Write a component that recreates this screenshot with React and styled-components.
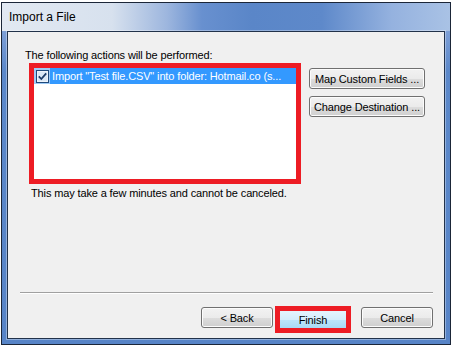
import styled, { createGlobalStyle } from 'styled-components';

const GlobalStyle = createGlobalStyle`
  body {
    margin: 0;
    background: #ffffff;
    font-family: "Liberation Sans", Arial, sans-serif;
  }
`;

const Window = styled.div`
  box-sizing: border-box;
  width: 450px;
  height: 343px;
  margin: 2px 0 0 1px;
  border: 1px solid #1b2638;
  background: #5b88ca;
  display: flex;
  flex-direction: column;
`;

const TitleBar = styled.div`
  flex: none;
  height: 28px;
  display: flex;
  align-items: center;
  padding-left: 7px;
  font-size: 12px;
  color: #000;
  background: linear-gradient(
    to right,
    #e2e9f2 0px,
    #d7e1ee 110px,
    #9db6de 165px,
    #6890cf 200px,
    #5a86c8 250px,
    #5e89ca 320px,
    #95b2df 390px,
    #a9c2e5 448px
  );
`;

const Frame = styled.div`
  flex: 1;
  min-height: 0;
  display: flex;
  padding: 0 5px 5px;
  background: linear-gradient(#7d9fd6, #5b88ca 40px, #5784c7);
`;

const Client = styled.div`
  flex: 1;
  display: flex;
  flex-direction: column;
  border: 1px solid #22324a;
  background: #f0f0f0;
  box-shadow: 0 0 0 1px rgba(255, 255, 255, 0.35);
  letter-spacing: -0.13px;
`;

const Top = styled.div`
  padding: 16px 0 0 17px;
`;

const Caption = styled.div`
  font-size: 11px;
  line-height: 15px;
  color: #000;
  margin-left: ${p => p.$indent || 0}px;
  margin-top: ${p => p.$gap || 0}px;
`;

const MainRow = styled.div`
  display: flex;
  align-items: flex-start;
  margin-left: 4px;
`;

const ListFrame = styled.div`
  box-sizing: border-box;
  width: 272px;
  height: 121px;
  border: 5px solid #ed1c24;
  background: #ffffff;
`;

const ListRow = styled.div`
  display: flex;
  height: 16px;
`;

const CheckCell = styled.div`
  width: 16px;
  display: flex;
  align-items: center;
  justify-content: center;
  background: #9fcaf5;
`;

const RowText = styled.div`
  flex: 1;
  padding-left: 2px;
  background: #3399ff;
  color: #ffffff;
  font-size: 11px;
  line-height: 16px;
  white-space: nowrap;
  overflow: hidden;
`;

const SideButtons = styled.div`
  display: flex;
  flex-direction: column;
  gap: 7px;
  margin-left: 8px;
  padding-top: 5px;
`;

const Button = styled.button`
  box-sizing: border-box;
  width: ${p => p.$w || 72}px;
  height: 21px;
  padding: 0;
  font-family: inherit;
  font-size: 11px;
  letter-spacing: -0.13px;
  color: #000;
  border: 1px solid #707070;
  border-radius: 3px;
  box-shadow: inset 0 0 0 1px #fcfcfc;
  background: linear-gradient(#f2f2f2 0%, #ebebeb 50%, #dddddd 51%, #cfcfcf 100%);
  white-space: nowrap;
`;

const Separator = styled.div`
  margin: auto 11px 0 12px;
  border-top: 1px solid #a0a0a0;
  border-bottom: 1px solid #ffffff;
`;

const Footer = styled.div`
  display: flex;
  justify-content: flex-end;
  align-items: flex-start;
  padding: 13px 11px 5px 0;
`;

const FinishFrame = styled.div`
  box-sizing: border-box;
  width: 76px;
  height: 27px;
  margin: -1px 0 0 2px;
  border: 5px solid #ed1c24;
  display: flex;
`;

const FinishButton = styled.button`
  flex: 1;
  padding: 0;
  border: none;
  font-family: inherit;
  font-size: 11px;
  letter-spacing: -0.13px;
  color: #000;
  background: linear-gradient(#e5f4fc 0%, #d4edfb 50%, #bde5fb 51%, #a8daf6 100%);
`;

const Spacer = styled.div`
  width: ${p => p.$w}px;
`;

const CheckBox = () => (
  <svg width="13" height="13" viewBox="0 0 13 13">
    <rect x="0.5" y="0.5" width="12" height="12" fill="#eef4fb" stroke="#1f4a7c" />
    <rect x="2" y="2" width="9" height="9" fill="#dbe8f6" />
    <path d="M2.8 6.4 L5.3 9 L10.2 3.4" fill="none" stroke="#1c3c68" strokeWidth="1.8" />
  </svg>
);

const App = () => {
  return (
    <>
      <GlobalStyle />
      <Window>
        <TitleBar>Import a File</TitleBar>
        <Frame>
          <Client>
            <Top>
              <Caption>The following actions will be performed:</Caption>
              <MainRow>
                <ListFrame>
                  <ListRow>
                    <CheckCell>
                      <CheckBox />
                    </CheckCell>
                    <RowText>Import "Test file.CSV" into folder: Hotmail.co (s...</RowText>
                  </ListRow>
                </ListFrame>
                <SideButtons>
                  <Button $w={116}>Map Custom Fields ...</Button>
                  <Button $w={116}>Change Destination ...</Button>
                </SideButtons>
              </MainRow>
              <Caption $indent={6} $gap={2}>This may take a few minutes and cannot be canceled.</Caption>
            </Top>
            <Separator />
            <Footer>
              <Button $w={72}>&lt; Back</Button>
              <FinishFrame>
                <FinishButton>Finish</FinishButton>
              </FinishFrame>
              <Spacer $w={10} />
              <Button $w={72}>Cancel</Button>
            </Footer>
          </Client>
        </Frame>
      </Window>
    </>
  );
};

export default App;
